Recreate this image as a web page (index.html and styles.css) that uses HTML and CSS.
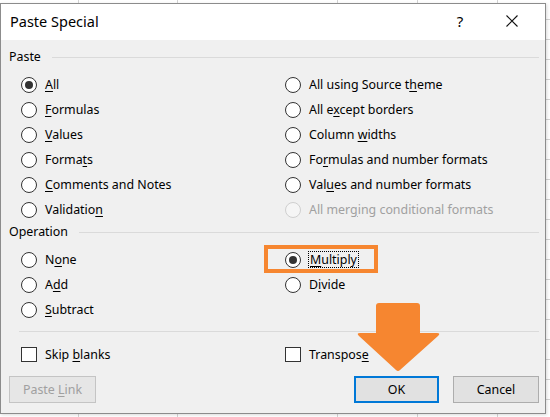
FILE: index.html
```html
<!DOCTYPE html>
<html>
<head>
<meta charset="utf-8">
<link rel="stylesheet" href="styles.css">
</head>
<body>
<div class="desk">
  <div class="dialog">
    <div class="titlebar">
      <span class="title">Paste Special</span>
      <span class="help">?</span>
      <span class="close"><svg width="12" height="12" viewBox="0 0 12 12"><path d="M0.5 0.5 L11.5 11.5 M11.5 0.5 L0.5 11.5" stroke="#111" stroke-width="1.1" fill="none"/></svg></span>
    </div>
    <div class="body">
      <div class="group"><span class="glabel">Paste</span><span class="gline"></span></div>
      <div class="grid">
        <div class="opt"><span class="radio on"></span><span><u>A</u>ll</span></div>
        <div class="opt"><span class="radio"></span><span>All using Source t<u>h</u>eme</span></div>
        <div class="opt"><span class="radio"></span><span><u>F</u>ormulas</span></div>
        <div class="opt"><span class="radio"></span><span>All e<u>x</u>cept borders</span></div>
        <div class="opt"><span class="radio"></span><span><u>V</u>alues</span></div>
        <div class="opt"><span class="radio"></span><span>Column <u>w</u>idths</span></div>
        <div class="opt"><span class="radio"></span><span>Forma<u>t</u>s</span></div>
        <div class="opt"><span class="radio"></span><span>Fo<u>r</u>mulas and number formats</span></div>
        <div class="opt"><span class="radio"></span><span><u>C</u>omments and Notes</span></div>
        <div class="opt"><span class="radio"></span><span>Val<u>u</u>es and number formats</span></div>
        <div class="opt"><span class="radio"></span><span>Validatio<u>n</u></span></div>
        <div class="opt disabled"><span class="radio"></span><span>All mer<u>g</u>ing conditional formats</span></div>
      </div>
      <div class="group op"><span class="glabel">Operation</span><span class="gline"></span></div>
      <div class="grid">
        <div class="opt"><span class="radio"></span><span>N<u>o</u>ne</span></div>
        <div class="opt"><span class="radio on"></span><span class="focus"><u>M</u>ultiply</span></div>
        <div class="opt"><span class="radio"></span><span>A<u>d</u>d</span></div>
        <div class="opt"><span class="radio"></span><span>D<u>i</u>vide</span></div>
        <div class="opt"><span class="radio"></span><span><u>S</u>ubtract</span></div>
        <div class="opt"></div>
      </div>
      <div class="sep"></div>
      <div class="grid checks">
        <div class="opt"><span class="check"></span><span>Skip <u>b</u>lanks</span></div>
        <div class="opt"><span class="check"></span><span>Transpos<u>e</u></span></div>
      </div>
      <div class="footer">
        <button class="btn disabled">Paste <u>L</u>ink</button>
        <span class="spacer"></span>
        <button class="btn default">OK</button>
        <button class="btn">Cancel</button>
      </div>
    </div>
  </div>
  <div class="highlight"></div>
  <svg class="arrow" width="100" height="80" viewBox="350 298 100 80">
    <path d="M376 306 Q376 303 379 303 L417 303 Q420 303 420 306 L420 333 L437 333 Q441 333 438 336 L400 370 Q398 372 396 370 L359 336 Q356 333 360 333 L376 333 Z" fill="#f68630"/>
  </svg>
</div>
</body>
</html>
```
FILE: styles.css
```css
* { box-sizing: border-box; }
html, body { margin: 0; padding: 0; }
body {
  font-family: "Noto Sans", "Open Sans", sans-serif;
  font-size: 12.4px;
  color: #000;
  background: #fff;
}
.desk {
  position: relative;
  width: 550px;
  height: 417px;
  overflow: hidden;
  padding-top: 3px;
  background-color: #fff;
  background-image:
    linear-gradient(to right, transparent 78px, #d4d4d4 78px, #d4d4d4 79px, transparent 79px),
    linear-gradient(to right, transparent 177px, #d4d4d4 177px, #d4d4d4 178px, transparent 178px),
    linear-gradient(to right, transparent 337px, #d4d4d4 337px, #d4d4d4 338px, transparent 338px),
    linear-gradient(to right, transparent 417px, #d4d4d4 417px, #d4d4d4 418px, transparent 418px),
    linear-gradient(to right, transparent 497px, #d4d4d4 497px, #d4d4d4 498px, transparent 498px),
    repeating-linear-gradient(to bottom, transparent 0, transparent 19px, #d4d4d4 19px, #d4d4d4 20px);
}
.dialog {
  width: 546px;
  height: 411px;
  border: 1px solid #8c8c8c;
  background: #f0f0f0;
  display: flex;
  flex-direction: column;
  box-shadow: 1px 1px 3px rgba(0,0,0,0.15);
}
.titlebar {
  height: 36px;
  background: #fff;
  display: flex;
  align-items: center;
  padding-left: 9px;
}
.title { font-size: 14.5px; flex: 1; padding-bottom: 2px; }
.help { font-size: 15px; width: 58px; text-align: center; padding-bottom: 2px; }
.close { width: 46px; display: flex; justify-content: center; margin-right: 10px; padding-bottom: 2px; }
.body {
  flex: 1;
  display: flex;
  flex-direction: column;
  padding: 0 6px 0 0;
}
.group {
  height: 18px;
  margin-top: 8px;
  display: flex;
  align-items: center;
  padding-left: 8px;
}
.group.op { margin-top: 1px; }
.glabel { margin-right: 11px; line-height: 18px; }
.gline { flex: 1; height: 1px; background: #dadada; }
.grid {
  display: grid;
  grid-template-columns: 264px 1fr;
  grid-auto-rows: 25px;
  padding-left: 20px;
  margin-top: 6px;
}
.opt {
  display: flex;
  align-items: center;
  gap: 8px;
}
.radio {
  width: 16px;
  height: 16px;
  border-radius: 50%;
  border: 1px solid #333;
  background: #fff;
  position: relative;
  flex: none;
}
.radio.on::after {
  content: "";
  position: absolute;
  left: 3px; top: 3px;
  width: 8px; height: 8px;
  border-radius: 50%;
  background: #333;
}
.disabled { color: #a0a0a0; }
.opt.disabled .radio { border-color: #cfcfcf; background: #f5f5f5; }
u { text-decoration-thickness: 1px; text-underline-offset: 2px; }
.focus { outline: 1px dotted #000; outline-offset: 0; padding: 0 1px; line-height: 15px; }
.sep {
  height: 1px;
  background: #dadada;
  margin: 9px 0 0 18px;
}
.checks { margin-top: 10px; }
.check {
  width: 16px;
  height: 15px;
  border: 1px solid #333;
  background: #fff;
  flex: none;
}
.footer {
  display: flex;
  margin-top: 9px;
  padding-left: 8px;
  gap: 14px;
}
.spacer { flex: 1; }
.btn {
  font-family: inherit;
  font-size: 12.4px;
  height: 27px;
  width: 86px;
  background: #e1e1e1;
  border: 1px solid #adadad;
  color: #000;
  padding: 0;
}
.btn.disabled { background: #e6e6e6; border-color: #c4c4c4; color: #a0a0a0; width: 87px; }
.btn.default { border: 2px solid #0078d7; width: 85px; }
.highlight {
  position: absolute;
  left: 264px;
  top: 245px;
  width: 114px;
  height: 28px;
  border: 4px solid #f68630;
}
.arrow {
  position: absolute;
  left: 350px;
  top: 298px;
}
```
